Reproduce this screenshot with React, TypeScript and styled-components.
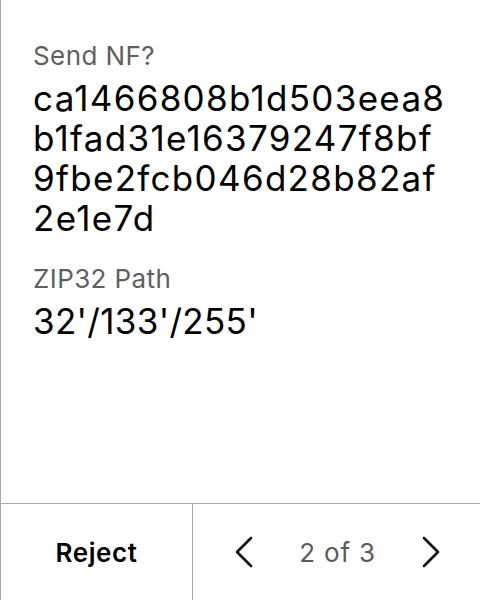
import React from "react";
import styled, { createGlobalStyle } from "styled-components";

const Global = createGlobalStyle`
  html, body { margin: 0; padding: 0; background: #fff; }
  body { font-family: Inter, "Noto Sans", sans-serif; }
`;

const Screen = styled.div`
  width: 480px;
  height: 600px;
  box-sizing: border-box;
  border-left: 1px solid #a8a8a8;
  display: flex;
  flex-direction: column;
  background: #fff;
`;

const Content = styled.div`
  flex: 1;
  padding: 40px 30px 0 32px;
  display: flex;
  flex-direction: column;
`;

const Field = styled.div`
  display: flex;
  flex-direction: column;
  margin-bottom: 25px;
`;

const Label = styled.div`
  font-size: 26px;
  line-height: 32px;
  letter-spacing: 0.4px;
  color: #5f5f5f;
  margin-bottom: 6px;
`;

const Value = styled.div<{ $tracking?: number }>`
  font-size: 35px;
  line-height: 40px;
  color: #000;
  word-break: break-all;
  letter-spacing: ${(p) => (p.$tracking ?? 1.3)}px;
`;

const Footer = styled.div`
  height: 96px;
  border-top: 1px solid #a8a8a8;
  display: flex;
`;

const RejectButton = styled.button`
  width: 192px;
  border: none;
  border-right: 1px solid #a8a8a8;
  background: transparent;
  font-family: Inter, sans-serif;
  font-weight: 600;
  font-size: 26px;
  letter-spacing: 0.6px;
  color: #000;
  padding: 0;
`;

const Pager = styled.div`
  flex: 1;
  display: flex;
  align-items: center;
  justify-content: space-between;
  padding: 0 40px 0 42px;
`;

const Arrow = styled.button`
  border: none;
  background: transparent;
  padding: 0;
  width: 18px;
  height: 32px;
  display: flex;
  align-items: center;
  justify-content: center;
`;

const PageText = styled.span`
  font-size: 26px;
  letter-spacing: 0.8px;
  color: #5a5a5a;
`;

const Chevron = ({ dir }: { dir: "left" | "right" }) => (
  <svg width="18" height="32" viewBox="0 0 18 32" fill="none">
    <path
      d={dir === "left" ? "M16 2 L2 16 L16 30" : "M2 2 L16 16 L2 30"}
      stroke="#000"
      strokeWidth="2.5"
      strokeLinecap="round"
      strokeLinejoin="round"
    />
  </svg>
);

export default function App() {
  return (
    <>
      <Global />
      <Screen>
        <Content>
          <Field>
            <Label>Send NF?</Label>
            <Value>ca1466808b1d503eea8b1fad31e16379247f8bf9fbe2fcb046d28b82af2e1e7d</Value>
          </Field>
          <Field>
            <Label>ZIP32 Path</Label>
            <Value $tracking={0.3}>32'/133'/255'</Value>
          </Field>
        </Content>
        <Footer>
          <RejectButton>Reject</RejectButton>
          <Pager>
            <Arrow><Chevron dir="left" /></Arrow>
            <PageText>2 of 3</PageText>
            <Arrow><Chevron dir="right" /></Arrow>
          </Pager>
        </Footer>
      </Screen>
    </>
  );
}
